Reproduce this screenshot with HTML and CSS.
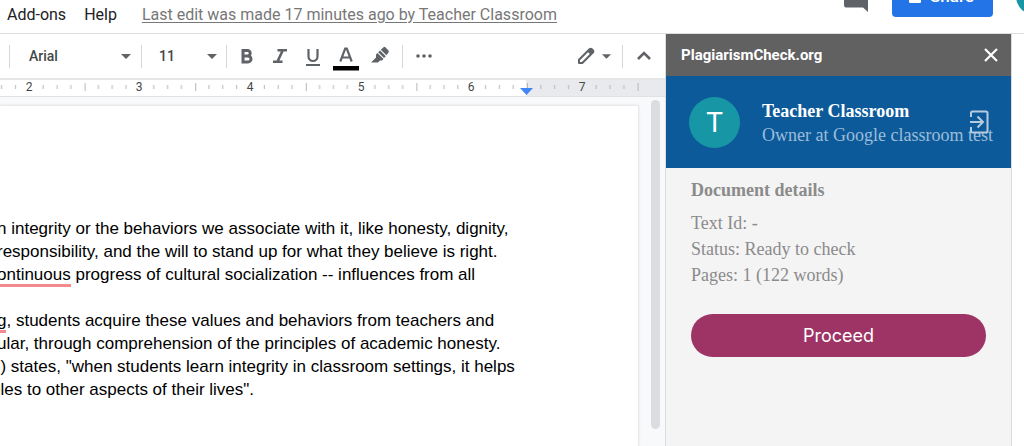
FILE: index.html
```
<!DOCTYPE html>
<html lang="en">
<head>
<meta charset="utf-8">
<title>Document editor</title>
<link rel="stylesheet" href="styles.css">
</head>
<body>
<header class="topbar">
  <nav class="menu">
    <button type="button">Add-ons</button>
    <button type="button">Help</button>
    <a class="last-edit" href="#history">Last edit was made 17 minutes ago by Teacher Classroom</a>
  </nav>
  <div class="actions">
    <button type="button" class="comments" aria-label="Comments">
      <svg width="24" height="24" viewBox="0 0 24 24"><path fill="#5f6368" d="M2 0H22Q24 0 24 2V24L19 19.500H2Q0 19.500 0 17V2Q0 0 2 0Z"/></svg>
    </button>
    <button type="button" class="share">
      <svg width="12" height="14" viewBox="0 0 12 14"><path fill="#fff" d="M2 5V4a4 4 0 0 1 8 0v1h1q1 0 1 1v7q0 1-1 1H1q-1 0-1-1V6q0-1 1-1zm2 0h4V4a2 2 0 0 0-4 0z"/></svg>
      Share
    </button>
    <span class="account"></span>
  </div>
</header>
<div class="workspace">
  <main class="editor">
    <div class="toolbar" role="toolbar">
      <span class="sep"></span>
      <button type="button" class="pick font">Arial<svg width="10" height="5" viewBox="0 0 10 5"><path fill="#5f6368" d="M0 0H10L5 5Z"/></svg></button>
      <span class="sep"></span>
      <button type="button" class="pick size">11<svg width="10" height="5" viewBox="0 0 10 5"><path fill="#5f6368" d="M0 0H10L5 5Z"/></svg></button>
      <span class="sep"></span>
      <div class="tools">
        <button type="button" aria-label="Bold"><svg width="26" height="32" viewBox="0 0 26 32"><path fill="none" stroke="#5f6368" stroke-width="3" d="M9 10.500H13.500a2.700 2.700 0 0 1 0 5.400H9M9 15.900H14a3 3 0 0 1 0 6H9M9 9V23.400"/></svg></button>
        <button type="button" aria-label="Italic"><svg width="26" height="32" viewBox="0 0 26 32"><path fill="none" stroke="#5f6368" stroke-width="2.600" d="M10.500 10.200H20M6 21.800H15.500M15.800 10.200L10.400 21.800"/></svg></button>
        <button type="button" aria-label="Underline"><svg width="26" height="32" viewBox="0 0 26 32"><path fill="none" stroke="#5f6368" stroke-width="2.200" d="M8.500 9V16.500a4.500 4.500 0 0 0 9 0V9M6 25H20"/></svg></button>
        <button type="button" aria-label="Text color"><svg width="26" height="32" viewBox="0 0 26 32"><path fill="none" stroke="#5f6368" stroke-width="2.200" d="M7.300 21.500L12.200 8.500H13.800L18.700 21.500M9 17.500H17"/><path d="M0 26H26V30.500H0Z"/></svg></button>
        <button type="button" aria-label="Highlight color"><svg width="26" height="32" viewBox="0 0 26 32"><path fill="#5f6368" d="M5 22.500L10 17.500V14.500L11.500 13L17.500 19L16 20.500H14L12 22.500ZM12.200 12.300L14 10.500L19.800 16.300L18 18ZM14.800 9.700L17.500 7.200Q18.500 6.500 19.400 7.300L22.500 10.400Q23.200 11.500 22.500 12.500L20.400 15.200Z"/></svg></button>
      </div>
      <span class="sep"></span>
      <button type="button" class="more" aria-label="More"><svg width="18" height="4" viewBox="0 0 18 4"><g fill="#5f6368"><circle cx="3" cy="2" r="1.800"/><circle cx="9" cy="2" r="1.800"/><circle cx="15" cy="2" r="1.800"/></g></svg></button>
      <div class="right-tools">
        <button type="button" class="mode" aria-label="Editing mode"><svg width="18" height="18" viewBox="0 0 18 18"><path fill="none" stroke="#5f6368" stroke-width="2" stroke-linejoin="round" d="M2 16V12.700L12.500 2.200a1.600 1.600 0 0 1 2.200 0L15.800 3.300a1.600 1.600 0 0 1 0 2.200L5.300 16Z"/><path fill="#5f6368" d="M10.500 4.500L13 1.500H15L17 4V5L13.500 7.800Z"/></svg><svg width="9" height="5" viewBox="0 0 10 5"><path fill="#5f6368" d="M0 0H10L5 5Z"/></svg></button>
        <span class="sep"></span>
        <button type="button" class="collapse" aria-label="Hide menus"><svg width="14" height="10" viewBox="0 0 14 10"><path fill="none" stroke="#5f6368" stroke-width="2.600" d="M1 8L7 2L13 8"/></svg></button>
      </div>
    </div>
    <svg class="ruler" height="16" role="img" aria-label="Ruler">
      <defs>
        <pattern id="inch" x="-26" width="110.600" height="16" patternUnits="userSpaceOnUse">
          <path fill="none" stroke="#b4b7bb" d="M.5 3V11M13.800 5V9M27.600 5V9M41.500 5V9M69.100 5V9M83 5V9M96.800 5V9"/>
        </pattern>
      </defs>
      <rect x="526" width="100%" height="16" fill="#e8eaed"/>
      <rect width="639" height="16" fill="url(#inch)"/>
      <g class="ruler-numbers">
        <text x="29" y="11">2</text><text x="139" y="11">3</text><text x="250" y="11">4</text><text x="361" y="11">5</text><text x="471" y="11">6</text><text x="582" y="11">7</text>
      </g>
      <path fill="#4285f4" d="M520 8H533L526.500 15Z"/>
    </svg>
    <div class="canvas">
      <article class="page">
        <p>n integrity or the behaviors we associate with it, like honesty, dignity,<br>responsibility, and the will to stand up for what they believe is right.<br><span class="misspelt">ontinuous</span> progress of cultural socialization -- influences from all</p>
        <p><span class="misspelt">g</span>, students acquire these values and behaviors from teachers and<br>ular, through comprehension of the principles of academic honesty.<br><span class="cut">6</span>) states, "when students learn integrity in classroom settings, it helps<br><span class="cut">p</span>les to other aspects of their lives".</p>
      </article>
      <div class="scroll"><div class="thumb"></div></div>
    </div>
  </main>
  <aside class="addon">
    <div class="addon-title">
      <h1>PlagiarismCheck.org</h1>
      <button type="button" aria-label="Close"><svg width="14" height="14" viewBox="0 0 14 14"><path fill="none" stroke="#fff" stroke-width="2.200" d="M1 1L13 13M13 1L1 13"/></svg></button>
    </div>
    <section class="user">
      <span class="avatar">T</span>
      <div class="who">
        <strong>Teacher Classroom</strong>
        <span>Owner at Google classroom test</span>
      </div>
      <button type="button" class="logout" aria-label="Log out"><svg width="20" height="24" viewBox="0 0 20 24"><path fill="none" stroke="#b5cbe0" stroke-width="2" d="M2 7V3Q2 1.500 3.500 1.500H17Q18.500 1.500 18.500 3V21Q18.500 22.500 17 22.500H3.500Q2 22.500 2 21V17M1 12H13.500M8.500 6.500L14 12L8.500 17.500"/></svg></button>
    </section>
    <section class="details">
      <h2>Document details</h2>
      <p>Text Id: -</p>
      <p>Status: Ready to check</p>
      <p>Pages: 1 (122 words)</p>
      <button type="button" class="proceed">Proceed</button>
    </section>
  </aside>
</div>
</body>
</html>
```
FILE: styles.css
```
* { box-sizing: border-box; }
body {
  margin: 0;
  height: 100vh;
  display: flex;
  flex-direction: column;
  overflow: hidden;
  background: #fff;
  font-family: Roboto, "Liberation Sans", sans-serif;
}
button {
  border: 0;
  padding: 0;
  background: none;
  font: inherit;
  color: inherit;
  display: flex;
  align-items: center;
  cursor: pointer;
}
svg { display: block; flex: none; }

.topbar {
  flex: none;
  height: 34px;
  border-bottom: 1px solid #dedede;
  display: flex;
  justify-content: space-between;
  align-items: flex-start;
  overflow: hidden;
}
.menu {
  display: flex;
  gap: 18px;
  padding: 5px 0 0 7px;
  font-size: 16px;
  line-height: 20px;
  color: #202124;
  white-space: nowrap;
}
.last-edit { margin-left: 7px; color: #777; text-underline-offset: 2px; }
.actions { display: flex; flex: none; margin-right: -30px; }
.comments { margin: -17px 24px 0 0; }
.share {
  width: 101px;
  height: 40px;
  margin: -23px 23px 0 0;
  padding: 0 0 2px 17px;
  gap: 9px;
  border-radius: 4px;
  background: #2374e6;
  color: #fff;
  font-size: 17px;
  font-weight: 500;
}
.account { width: 38px; height: 38px; margin-top: -23px; border-radius: 50%; background: #1797a6; }

.workspace { flex: 1; min-height: 0; display: flex; padding-right: 12px; }
.editor { flex: 1; min-width: 0; display: flex; flex-direction: column; }
.toolbar {
  flex: none;
  height: 46px;
  border-bottom: 2px solid #e6e6e6;
  padding-left: 9px;
  display: flex;
  align-items: center;
  font-size: 14px;
  font-weight: 500;
  color: #444746;
}
.sep { flex: none; width: 1px; height: 23px; background: #d5d7da; }
.pick { justify-content: space-between; height: 28px; }
.font { width: 131px; padding: 0 10px 0 19px; }
.size { width: 84px; padding: 0 9px 0 17px; }
.tools { display: flex; gap: 7px; padding: 0 10px 0 7px; }
.more { padding: 0 12px; }
.right-tools { margin-left: auto; display: flex; align-items: center; }
.mode { gap: 7px; padding-right: 11px; }
.collapse { padding: 0 14px 0 14px; }

.ruler { width: 100%; }
.ruler-numbers { font-size: 12px; fill: #444746; text-anchor: middle; }

.canvas {
  flex: 1;
  min-height: 0;
  display: flex;
  justify-content: space-between;
  padding-top: 9px;
  border-top: 1px solid #dfe1e5;
  background: #f8f9fb;
}
.page {
  flex: 1;
  min-width: 0;
  overflow: hidden;
  padding-top: 111px;
  background: #fff;
  box-shadow: 0 0 2px 1px #e2e4e7;
  font: 17px/23px "Liberation Sans", Arial, sans-serif;
  color: #000;
  white-space: nowrap;
}
.page p { margin: 0 0 23px -3px; }
.misspelt { border-bottom: 3px solid #f48a8e; }
.cut { margin-left: -6px; }
.scroll { width: 27px; display: flex; justify-content: center; margin-top: -6px; padding: 0 0 17px 7px; }
.thumb { width: 9px; border-radius: 5px; background: #dadce0; }

.addon {
  flex: none;
  width: 347px;
  border: solid #dadce0;
  border-width: 0 1px;
  background: #f4f4f4;
  font-family: "Liberation Serif", "Times New Roman", serif;
  font-size: 18px;
}
.addon-title {
  display: flex;
  align-items: center;
  justify-content: space-between;
  height: 42px;
  padding: 0 13px 0 15px;
  background: #616161;
  color: #fff;
}
.addon-title h1 { margin: 0; font: 700 15px/20px Roboto, sans-serif; }
.user {
  position: relative;
  display: flex;
  align-items: center;
  gap: 22px;
  height: 92px;
  padding-left: 23px;
  background: #0c5a9a;
  white-space: nowrap;
}
.avatar {
  flex: none;
  width: 51px;
  height: 51px;
  border-radius: 50%;
  background: #1797a6;
  color: #fff;
  font: 28px/51px Roboto, sans-serif;
  text-align: center;
}
.who { display: flex; flex-direction: column; padding-top: 1px; line-height: 24px; color: #9cbdd9; }
.who strong { color: #fff; }
.logout { position: absolute; right: 22px; top: 34px; }
.details { padding: 9px 25px; color: #8b8b8b; }
.details h2 { margin: 0 0 7px; font-size: 18px; line-height: 26px; }
.details p { margin: 0; line-height: 26px; }
.proceed {
  justify-content: center;
  width: 100%;
  height: 43px;
  margin-top: 26px;
  border-radius: 22px;
  background: #9e3466;
  color: #fff;
  font: 18px Inter, sans-serif;
}
```
